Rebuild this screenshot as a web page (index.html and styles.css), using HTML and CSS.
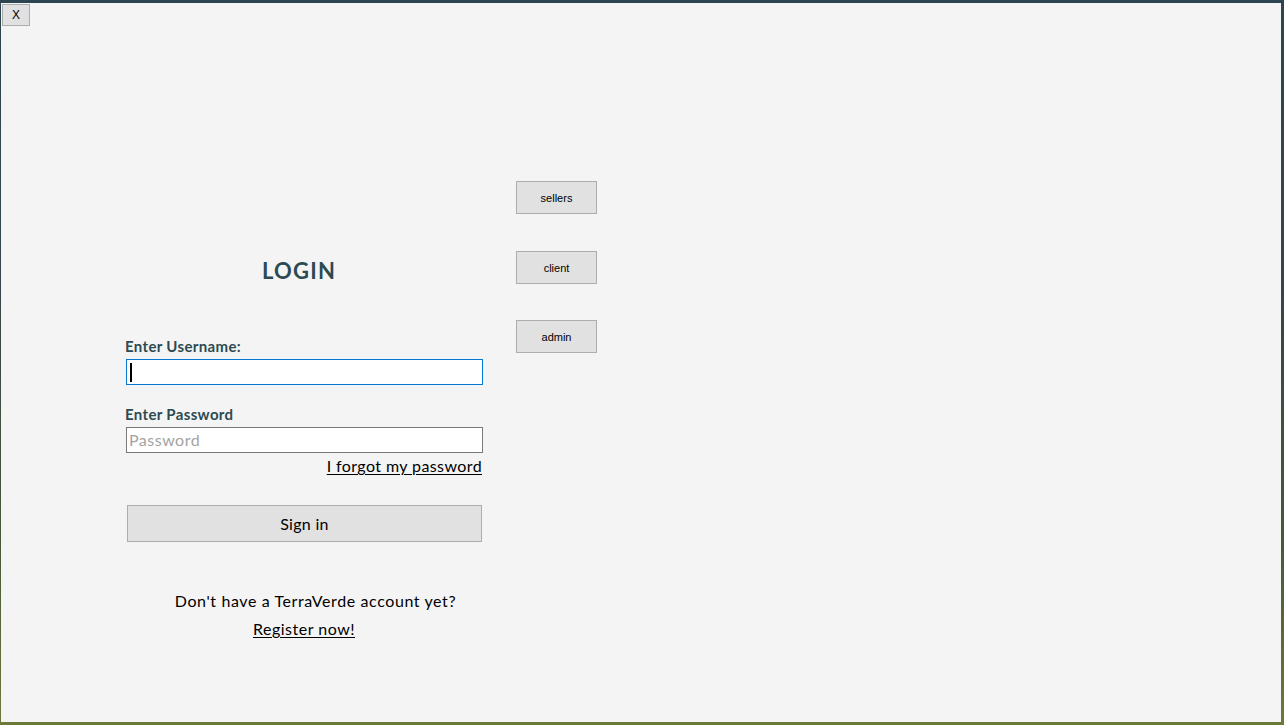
FILE: index.html
```html
<!DOCTYPE html>
<html lang="en">
<head>
<meta charset="utf-8">
<title>Login</title>
<link rel="stylesheet" href="styles.css">
</head>
<body>
<div class="window">
  <button class="close" type="button">X</button>
  <div class="content">
    <div class="login">
      <h1 class="title">LOGIN</h1>
      <div class="label">Enter Username:</div>
      <div class="input focused"><span class="caret"></span></div>
      <div class="label">Enter Password</div>
      <div class="input"><span class="placeholder">Password</span></div>
      <div class="forgot-row"><a class="link" href="#">I forgot my password</a></div>
      <button class="signin" type="button">Sign in</button>
      <p class="noacc">Don't have a TerraVerde account yet?</p>
      <div class="register-row"><a class="link" href="#">Register now!</a></div>
    </div>
    <div class="roles">
      <button class="role" type="button">sellers</button>
      <button class="role" type="button">client</button>
      <button class="role" type="button">admin</button>
    </div>
  </div>
</div>
</body>
</html>
```

FILE: styles.css
```css
html, body {
  margin: 0;
  padding: 0;
}
body {
  width: 1284px;
  height: 725px;
  overflow: hidden;
  background: linear-gradient(180deg, #2d4550 0%, #34464a 40%, #4a5838 75%, #6b7a3a 100%);
  font-family: "Lato", "Liberation Sans", sans-serif;
}
.window {
  margin: 3px 3px 0 1px;
  width: 1280px;
  height: 719px;
  background: #f4f4f4;
  display: flex;
  flex-direction: column;
}
.close {
  margin: 1px 0 0 1px;
  width: 28px;
  height: 22px;
  padding: 0;
  background: #e1e1e1;
  border: 1px solid #adadad;
  font-family: "Liberation Sans", sans-serif;
  font-size: 12px;
  color: #000;
  line-height: 18px;
  align-self: flex-start;
}
.content {
  display: flex;
  align-items: flex-start;
  gap: 33px;
  padding-left: 124px;
}
.login {
  width: 358px;
  display: flex;
  flex-direction: column;
  align-items: flex-start;
}
.title {
  margin: 233px 0 0 0;
  align-self: stretch;
  text-align: center;
  padding-right: 10px;
  font-size: 22px;
  line-height: 24px;
  font-weight: 700;
  letter-spacing: 1.2px;
  color: #2c4a52;
}
.label {
  margin-top: 54px;
  font-size: 15px;
  line-height: 18px;
  font-weight: 700;
  letter-spacing: 0.35px;
  color: #2c4a52;
}
.label + .input {
  margin-top: 4px;
}
.input + .label {
  margin-top: 20px;
}
.input {
  margin-left: 1px;
  box-sizing: border-box;
  width: 357px;
  height: 26px;
  background: #fff;
  border: 1px solid #7a7a7a;
  display: flex;
  align-items: center;
  padding-left: 2px;
}
.input.focused {
  border-color: #0078d7;
}
.caret {
  display: block;
  width: 2px;
  height: 19px;
  background: #000;
  margin-left: 1px;
}
.placeholder {
  font-size: 16px;
  letter-spacing: 0.5px;
  color: #a3a3a3;
  line-height: 18px;
}
.forgot-row {
  margin-top: 4px;
  align-self: stretch;
  text-align: right;
  padding-right: 1px;
  font-size: 16px;
  letter-spacing: 0.4px;
  line-height: 18px;
}
.link {
  color: #000;
  text-decoration: underline;
  text-underline-offset: 2px;
}
.signin {
  margin: 30px 0 0 2px;
  width: 355px;
  height: 37px;
  background: #e1e1e1;
  border: 1px solid #adadad;
  font-family: "Lato", "Liberation Sans", sans-serif;
  font-size: 16px;
  letter-spacing: 0.3px;
  color: #000;
  padding: 0;
}
.noacc {
  margin: 50px 0 0 0;
  align-self: stretch;
  text-align: center;
  padding-left: 23px;
  font-size: 16px;
  letter-spacing: 0.6px;
  line-height: 18px;
  color: #000;
}
.register-row {
  margin-top: 10px;
  align-self: stretch;
  text-align: center;
  font-size: 16px;
  letter-spacing: 0.5px;
  line-height: 18px;
}
.roles {
  margin-top: 155px;
  display: flex;
  flex-direction: column;
  gap: 37px;
}
.role {
  width: 81px;
  height: 33px;
  padding: 0;
  background: #e1e1e1;
  border: 1px solid #adadad;
  font-family: "Liberation Sans", sans-serif;
  font-size: 11px;
  color: #000;
}
.role + .role + .role {
  margin-top: -1px;
}
```
